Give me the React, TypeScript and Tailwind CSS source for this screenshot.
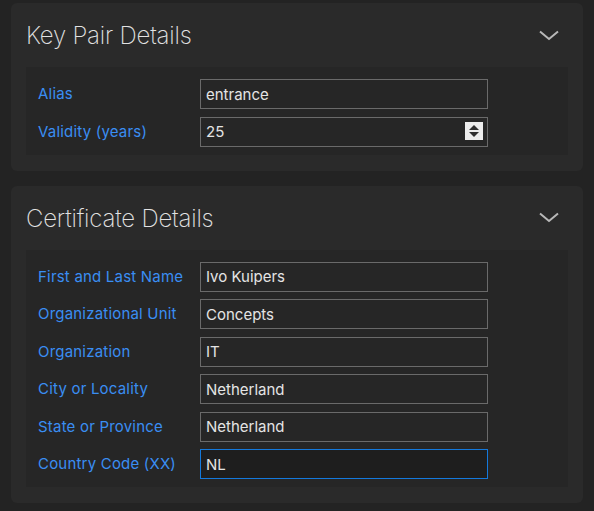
import { useState } from "react";

const keyFields = [
  { label: "Alias", value: "entrance" },
  { label: "Validity (years)", value: "25", number: true },
];

const certFields = [
  { label: "First and Last Name", value: "Ivo Kuipers" },
  { label: "Organizational Unit", value: "Concepts" },
  { label: "Organization", value: "IT" },
  { label: "City or Locality", value: "Netherland" },
  { label: "State or Province", value: "Netherland" },
  { label: "Country Code (XX)", value: "NL", focused: true },
];

type Field = { label: string; value: string; number?: boolean; focused?: boolean };

function Chevron() {
  return (
    <svg width="20" height="11" viewBox="0 0 20 11" className="mr-[9px]">
      <polyline points="1,1.5 10,9 19,1.5" fill="none" stroke="#b8b8b8" strokeWidth="2" />
    </svg>
  );
}

function Spinner() {
  return (
    <div className="absolute right-[5px] top-[5px] w-[18px] h-[18px] bg-[#ececec] flex flex-col items-center justify-center gap-[2px]">
      <svg width="10" height="5" viewBox="0 0 10 5">
        <polygon points="5,0 10,5 0,5" fill="#2e2e2e" />
      </svg>
      <svg width="10" height="5" viewBox="0 0 10 5">
        <polygon points="0,0 10,0 5,5" fill="#2e2e2e" />
      </svg>
    </div>
  );
}

function Row({ field }: { field: Field }) {
  const [value, setValue] = useState(field.value);
  return (
    <div className="flex items-center">
      <label className="w-[162px] pt-[1px] text-[15px] tracking-[0.2px] text-[#3a8ef3]">{field.label}</label>
      <div className="relative">
        <input
          value={value}
          onChange={(e) => setValue(e.target.value)}
          className={
            field.focused
              ? "w-[288px] h-[30px] px-[5px] bg-[#1e1e1e] border border-[#1479dc] text-[15px] text-[#e4e4e4] outline-none"
              : "w-[288px] h-[30px] px-[5px] bg-[#262626] border border-[#6a6a6a] text-[15px] text-[#e4e4e4] outline-none"
          }
        />
        {field.number && <Spinner />}
      </div>
    </div>
  );
}

function Section({ title, fields }: { title: string; fields: Field[] }) {
  return (
    <div className="bg-[#2a2a2a] rounded-md px-[15px] pb-4">
      <div className="h-16 flex items-center justify-between">
        <h2 className="pt-[2px] text-[24px] font-extralight text-[#e2e2e2] tracking-[-0.2px]">{title}</h2>
        <Chevron />
      </div>
      <div className="bg-[#262626] pl-3 pt-3 pb-2 flex flex-col gap-[7.5px]">
        {fields.map((f) => (
          <Row key={f.label} field={f} />
        ))}
      </div>
    </div>
  );
}

export default function App() {
  return (
    <div
      className="w-[594px] h-[511px] bg-[#232323] px-[11px] pt-[3px] flex flex-col gap-[15px] overflow-hidden"
      style={{ fontFamily: "Inter, 'Noto Sans', sans-serif" }}
    >
      <Section title="Key Pair Details" fields={keyFields} />
      <Section title="Certificate Details" fields={certFields} />
    </div>
  );
}
